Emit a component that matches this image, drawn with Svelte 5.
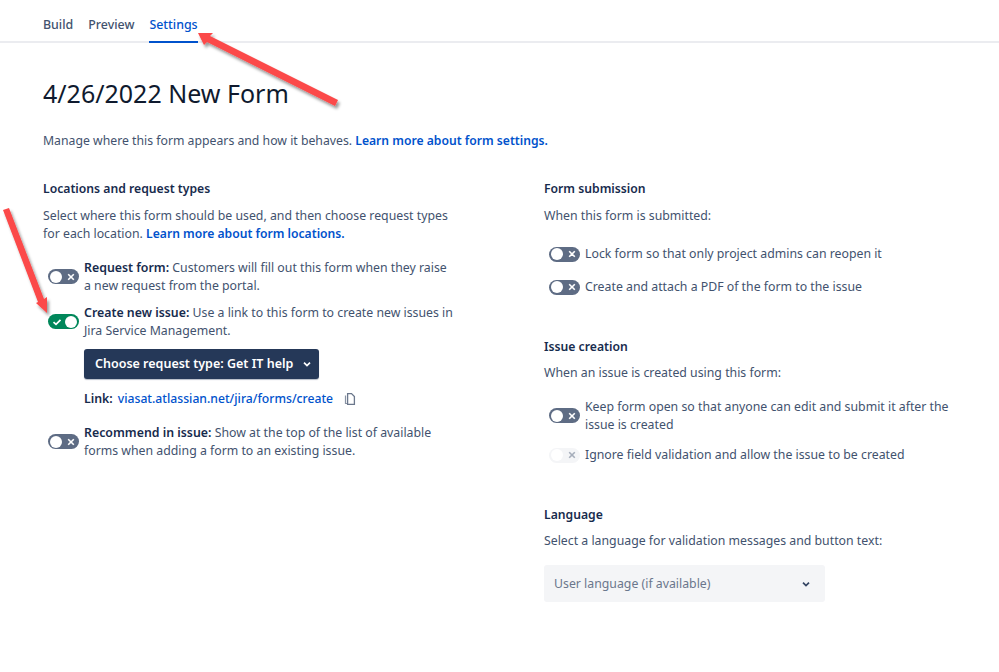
<script>
    const tabs = [
        { label: "Build", active: false },
        { label: "Preview", active: false },
        { label: "Settings", active: true },
    ];
</script>

{#snippet toggle(state)}
    <span class="toggle {state}">
        {#if state === "on"}
            <svg class="mark" viewBox="0 0 10 10" width="10" height="10">
                <path d="M1.5 5.2 L4 7.4 L8.5 2.8" fill="none" stroke="#fff" stroke-width="1.7" />
            </svg>
            <span class="knob"></span>
        {:else}
            <span class="knob"></span>
            <svg class="mark" viewBox="0 0 10 10" width="10" height="10">
                <path d="M2.2 2.2 L7.8 7.8 M7.8 2.2 L2.2 7.8" fill="none" stroke={state === "disabled" ? "#a5adba" : "#fff"} stroke-width="1.6" />
            </svg>
        {/if}
    </span>
{/snippet}

<div class="page">
    <nav class="tabs">
        {#each tabs as tab}
            <span class="tab" class:active={tab.active}>{tab.label}</span>
        {/each}
    </nav>

    <main class="content">
        <h1>4/26/2022 New Form</h1>
        <p class="intro">
            Manage where this form appears and how it behaves.
            <a href="#top">Learn more about form settings.</a>
        </p>

        <div class="columns">
            <section class="left">
                <h2>Locations and request types</h2>
                <p class="desc">
                    Select where this form should be used, and then choose request types for each location.
                    <a href="#top">Learn more about form locations.</a>
                </p>

                <div class="option first">
                    {@render toggle("off")}
                    <p><b>Request form:</b> Customers will fill out this form when they raise a new request from the portal.</p>
                </div>
                <div class="option second">
                    {@render toggle("on")}
                    <p><b>Create new issue:</b> Use a link to this form to create new issues in Jira Service Management.</p>
                </div>

                <div class="nested">
                    <button class="choose">
                        Choose request type: Get IT help
                        <svg viewBox="0 0 12 12" width="12" height="12">
                            <path d="M3 4.6 L6 7.6 L9 4.6" fill="none" stroke="#fff" stroke-width="1.7" />
                        </svg>
                    </button>
                    <div class="link">
                        <b>Link:</b> <a href="#top">viasat.atlassian.net/jira/forms/create</a>
                        <svg class="copy" viewBox="0 0 12 14" width="12" height="14">
                            <path d="M1.5 3.5 V11.5 H3" fill="none" stroke="#8993a4" stroke-width="1.2" />
                            <path d="M3.6 1.6 H7.5 L10.4 4.5 V12.4 H3.6 Z" fill="none" stroke="#6b778c" stroke-width="1.3" />
                        </svg>
                    </div>
                </div>

                <div class="option recommend">
                    {@render toggle("off")}
                    <p><b>Recommend in issue:</b> Show at the top of the list of available forms when adding a form to an existing issue.</p>
                </div>
            </section>

            <section class="right">
                <h2>Form submission</h2>
                <p class="desc">When this form is submitted:</p>
                <div class="option single lock">
                    {@render toggle("off")}
                    <p>Lock form so that only project admins can reopen it</p>
                </div>
                <div class="option single pdf">
                    {@render toggle("off")}
                    <p>Create and attach a PDF of the form to the issue</p>
                </div>

                <h2 class="issue">Issue creation</h2>
                <p class="desc tight">When an issue is created using this form:</p>
                <div class="option keep">
                    {@render toggle("off")}
                    <p>Keep form open so that anyone can edit and submit it after the issue is created</p>
                </div>
                <div class="option single ignore">
                    {@render toggle("disabled")}
                    <p>Ignore field validation and allow the issue to be created</p>
                </div>

                <h2 class="language">Language</h2>
                <p class="desc tight">Select a language for validation messages and button text:</p>
                <div class="select">
                    <span>User language (if available)</span>
                    <svg viewBox="0 0 12 12" width="12" height="12">
                        <path d="M3 4.6 L6 7.6 L9 4.6" fill="none" stroke="#344563" stroke-width="1.7" />
                    </svg>
                </div>
            </section>
        </div>
    </main>

    <!-- red annotation arrows drawn over the page -->
    <svg class="arrows" viewBox="0 0 999 672" width="999" height="672">
        <defs>
            <filter id="arrow-shadow" x="-20%" y="-20%" width="140%" height="140%">
                <feDropShadow dx="2" dy="3" stdDeviation="1.6" flood-color="#000" flood-opacity="0.4" />
            </filter>
        </defs>
        <g filter="url(#arrow-shadow)" fill="#fb4848">
            <path d="M198 33 L213 33 L210 36 L338 100 L335 106 L207 42 L204 45 Z" />
            <path d="M47 313 L47 297 L44 299 L9 208 L3 210 L38 302 L36 303 Z" />
        </g>
    </svg>
</div>

<style>
    :global(body) {
        background: #fff;
    }

    .page {
        position: relative;
        width: 999px;
        height: 672px;
        overflow: hidden;
        font-family: "Noto Sans", "Open Sans", sans-serif;
        font-size: 12.3px;
        line-height: 18px;
        color: #42526e;
    }

    .tabs {
        display: flex;
        gap: 15px;
        height: 41px;
        padding-left: 43px;
        border-bottom: 2px solid #ebecf0;
    }

    .tab {
        height: 25px;
        padding-top: 16px;
        font-size: 12.4px;
        font-weight: 500;
        line-height: 17px;
        color: #42526e;
    }

    .tab.active {
        color: #0052cc;
        border-bottom: 2px solid #0052cc;
    }

    .content {
        padding: 32px 0 0 43px;
    }

    h1 {
        margin: 0;
        font-size: 25px;
        line-height: 36px;
        font-weight: 400;
        color: #0f1a2e;
    }

    .intro {
        margin: 21px 0 0;
        font-size: 12.25px;
    }

    a {
        color: #0052cc;
        font-size: 12.15px;
        font-weight: 600;
        text-decoration: none;
    }

    .columns {
        display: flex;
        margin-top: 30px;
    }

    .left {
        width: 416px;
        margin-right: 85px;
    }

    .right {
        width: 420px;
    }

    h2 {
        margin: 0;
        font-size: 12.2px;
        line-height: 18px;
        font-weight: 600;
        color: #172b4d;
    }

    .desc {
        margin: 9px 0 0;
    }

    .desc.tight {
        margin-top: 8px;
    }

    .option {
        display: flex;
        align-items: flex-start;
    }

    .option p {
        margin: 0;
        flex: 1;
    }

    .option b,
    .link b {
        font-size: 12.35px;
        font-weight: 600;
        color: #172b4d;
    }

    .left .option {
        width: 412px;
    }

    .first {
        margin-top: 16px;
    }

    .second {
        margin-top: 9px;
    }

    .toggle {
        flex: none;
        display: flex;
        align-items: center;
        justify-content: space-between;
        box-sizing: border-box;
        width: 31px;
        height: 15px;
        margin: 10px 5px 0 5px;
        padding: 0 3px 0 2px;
        border-radius: 8px;
        background: #5e6c84;
    }

    .toggle.on {
        background: #00875a;
        padding: 0 2px 0 4px;
    }

    .toggle.disabled {
        background: #f4f5f7;
    }

    .knob {
        width: 12px;
        height: 12px;
        border-radius: 50%;
        background: #fff;
    }

    .nested {
        margin-left: 41px;
    }

    .choose {
        display: flex;
        align-items: center;
        gap: 8px;
        height: 30px;
        margin-top: 9px;
        padding: 0 6px 0 11px;
        border: 0;
        border-radius: 3px;
        background: #253858;
        color: #fff;
        font: 600 12.5px/18px "Noto Sans", "Open Sans", sans-serif;
        box-shadow: 0 1px 1px rgba(9, 30, 66, 0.3);
    }

    .link {
        display: flex;
        align-items: center;
        gap: 5px;
        margin-top: 11px;
    }

    .link a {
        font-size: 12.2px;
        font-weight: 500;
    }

    .copy {
        margin-left: 6px;
    }

    .recommend {
        margin-top: 16px;
    }

    .single {
        align-items: center;
    }

    .single .toggle {
        margin-top: 0;
    }

    .lock {
        margin-top: 20px;
    }

    .pdf {
        margin-top: 15px;
    }

    .issue {
        margin-top: 42px;
    }

    .keep {
        margin-top: 16px;
    }

    .ignore {
        margin-top: 12px;
    }

    .language {
        margin-top: 42px;
    }

    .select {
        display: flex;
        align-items: center;
        justify-content: space-between;
        box-sizing: border-box;
        width: 281px;
        height: 37px;
        margin-top: 15px;
        padding: 0 13px 0 10px;
        border-radius: 3px;
        background: #f4f5f7;
        color: #6b778c;
    }

    .arrows {
        position: absolute;
        left: 0;
        top: 0;
        pointer-events: none;
    }
</style>
